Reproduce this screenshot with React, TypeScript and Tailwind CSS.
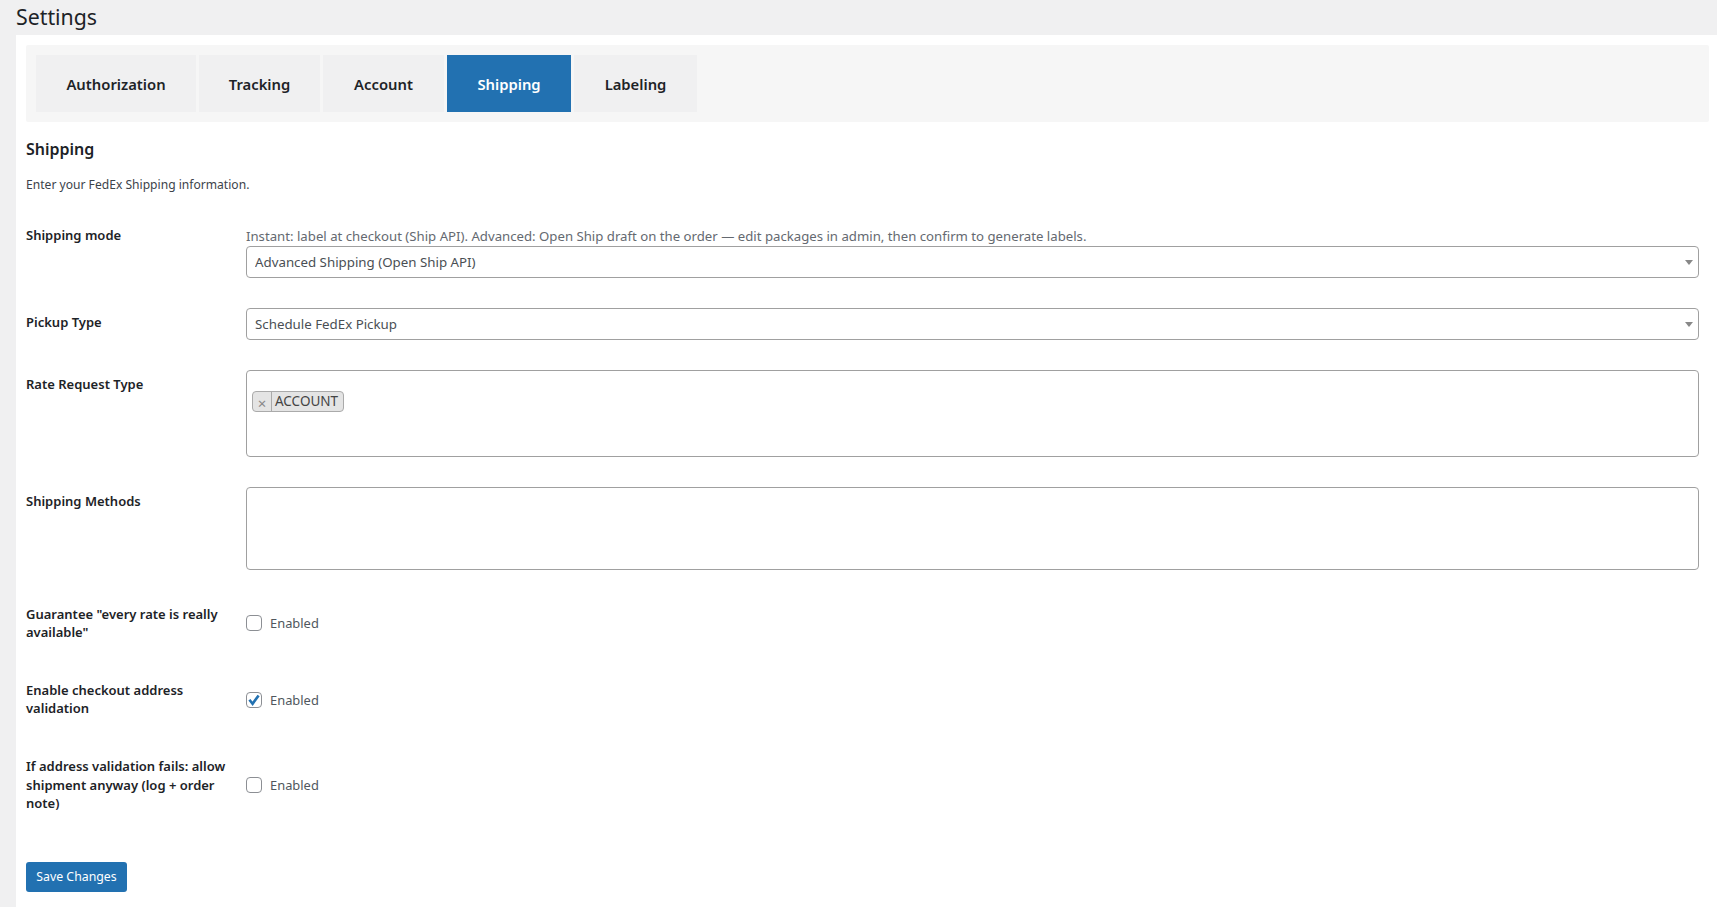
import { useState } from "react";

const tabs = [
  { label: "Authorization", width: "w-[160px]" },
  { label: "Tracking", width: "w-[121px]" },
  { label: "Account", width: "w-[121px]" },
  { label: "Shipping", width: "w-[124px]", active: true },
  { label: "Labeling", width: "w-[123px]" },
];

function Arrow() {
  return (
    <svg viewBox="0 0 8 5" className="pointer-events-none absolute right-[6px] top-[14px] h-[5px] w-[8px] fill-[#888888]">
      <path d="M0 0h8L4 5z" />
    </svg>
  );
}

function SelectBox({ value }: { value: string }) {
  return (
    <div className="relative h-[32px] w-full">
      <select
        defaultValue={value}
        className="h-full w-full appearance-none rounded-[4px] border border-[#a0a0a0] bg-white px-[8px] text-[13.3px] leading-[30px] text-[#4a4f54] outline-none"
      >
        <option>{value}</option>
      </select>
      <Arrow />
    </div>
  );
}

function Toggle({ initial = false }: { initial?: boolean }) {
  const [checked, setChecked] = useState(initial);
  return (
    <label className="flex items-center gap-[8px] text-[12.9px] leading-[18px] text-[#50575e]">
      <span className="relative block h-[16px] w-[16px]">
        <input
          type="checkbox"
          checked={checked}
          onChange={(e) => setChecked(e.target.checked)}
          className="block h-[16px] w-[16px] appearance-none rounded-[4px] border border-[#8c8f94] bg-white"
        />
        {checked ? (
          <svg viewBox="0 0 16 16" className="pointer-events-none absolute left-0 top-0 h-[16px] w-[16px]">
            <path d="M3.4 7.8 6.6 11.8 12.6 3.4" fill="none" stroke="#2271b1" strokeWidth="2.6" />
          </svg>
        ) : null}
      </span>
      Enabled
    </label>
  );
}

function Label({ children, className = "" }: { children: React.ReactNode; className?: string }) {
  return <div className={`w-[205px] text-[13px] font-semibold text-[#1d2327] ${className}`}>{children}</div>;
}

export default function App() {
  return (
    <div className="min-h-[907px] bg-[#f0f0f1] font-['Noto_Sans','Open_Sans',sans-serif]">
      <h1 className="h-[35px] pl-[16px] text-[21.3px] leading-[33px] text-[#1d2327]">Settings</h1>
      <div className="ml-[16px] h-[872px] bg-white pl-[10px] pr-[18px] pt-[10px]">
        <div className="-mr-[10px] flex h-[77px] gap-[3px] rounded-[2px] bg-[#f6f6f6] p-[10px]">
          {tabs.map((tab) => (
            <button
              key={tab.label}
              className={`${tab.width} pt-[1px] text-[14.8px] font-semibold ${tab.active ? "bg-[#2271b1] text-white" : "bg-[#f0f0f1] text-[#1d2327]"}`}
            >
              {tab.label}
            </button>
          ))}
        </div>

        <h2 className="mt-[15px] text-[16px] font-semibold leading-[24px] text-[#1d2327]">Shipping</h2>
        <p className="mt-[14px] text-[12.1px] leading-[20px] text-[#3c434a]">Enter your FedEx Shipping information.</p>

        <div className="mt-[31px] flex justify-between">
          <Label className="leading-[18px]">Shipping mode</Label>
          <div className="w-[1453px]">
            <p className="h-[20px] text-[13.2px] leading-[20px] text-[#646970]">
              Instant: label at checkout (Ship API). Advanced: Open Ship draft on the order — edit packages in admin, then confirm to generate labels.
            </p>
            <SelectBox value="Advanced Shipping (Open Ship API)" />
          </div>
        </div>

        <div className="mt-[30px] flex justify-between">
          <Label className="pt-[5px] leading-[18px]">Pickup Type</Label>
          <div className="w-[1453px]">
            <SelectBox value="Schedule FedEx Pickup" />
          </div>
        </div>

        <div className="mt-[30px] flex justify-between">
          <Label className="pt-[5px] leading-[18px]">Rate Request Type</Label>
          <div className="h-[87px] w-[1453px] rounded-[4px] border border-[#a0a0a0] bg-white pl-[5px] pt-[20px]">
            <div className="flex h-[21px] w-[92px] overflow-hidden rounded-[4px] border border-[#aaaaaa] bg-[#e4e4e4] text-[13.5px] leading-[18px] text-[#444444]">
              <span className="flex w-[19px] items-center justify-center border-r border-[#aaaaaa] pt-[3px] text-[15px] text-[#888888]">×</span>
              <span className="pl-[3px]">ACCOUNT</span>
            </div>
          </div>
        </div>

        <div className="mt-[30px] flex justify-between">
          <Label className="pt-[5px] leading-[18px]">Shipping Methods</Label>
          <div className="h-[83px] w-[1453px] rounded-[4px] border border-[#a0a0a0] bg-white" />
        </div>

        <div className="mt-[35px] flex items-center justify-between">
          <Label className="leading-[18px]">Guarantee "every rate is really available"</Label>
          <div className="w-[1453px]"><Toggle /></div>
        </div>

        <div className="mt-[40px] flex items-center justify-between">
          <Label className="leading-[18px]">Enable checkout address validation</Label>
          <div className="w-[1453px] pt-[1px]"><Toggle initial /></div>
        </div>

        <div className="mt-[40px] flex items-center justify-between">
          <Label className="leading-[18.5px]">If address validation fails: allow shipment anyway (log + order note)</Label>
          <div className="w-[1453px]"><Toggle /></div>
        </div>

        <button className="mt-[49px] block h-[30px] w-[101px] rounded-[3px] bg-[#2271b1] pt-[2px] text-[12.3px] text-white">Save Changes</button>
      </div>
    </div>
  );
}
